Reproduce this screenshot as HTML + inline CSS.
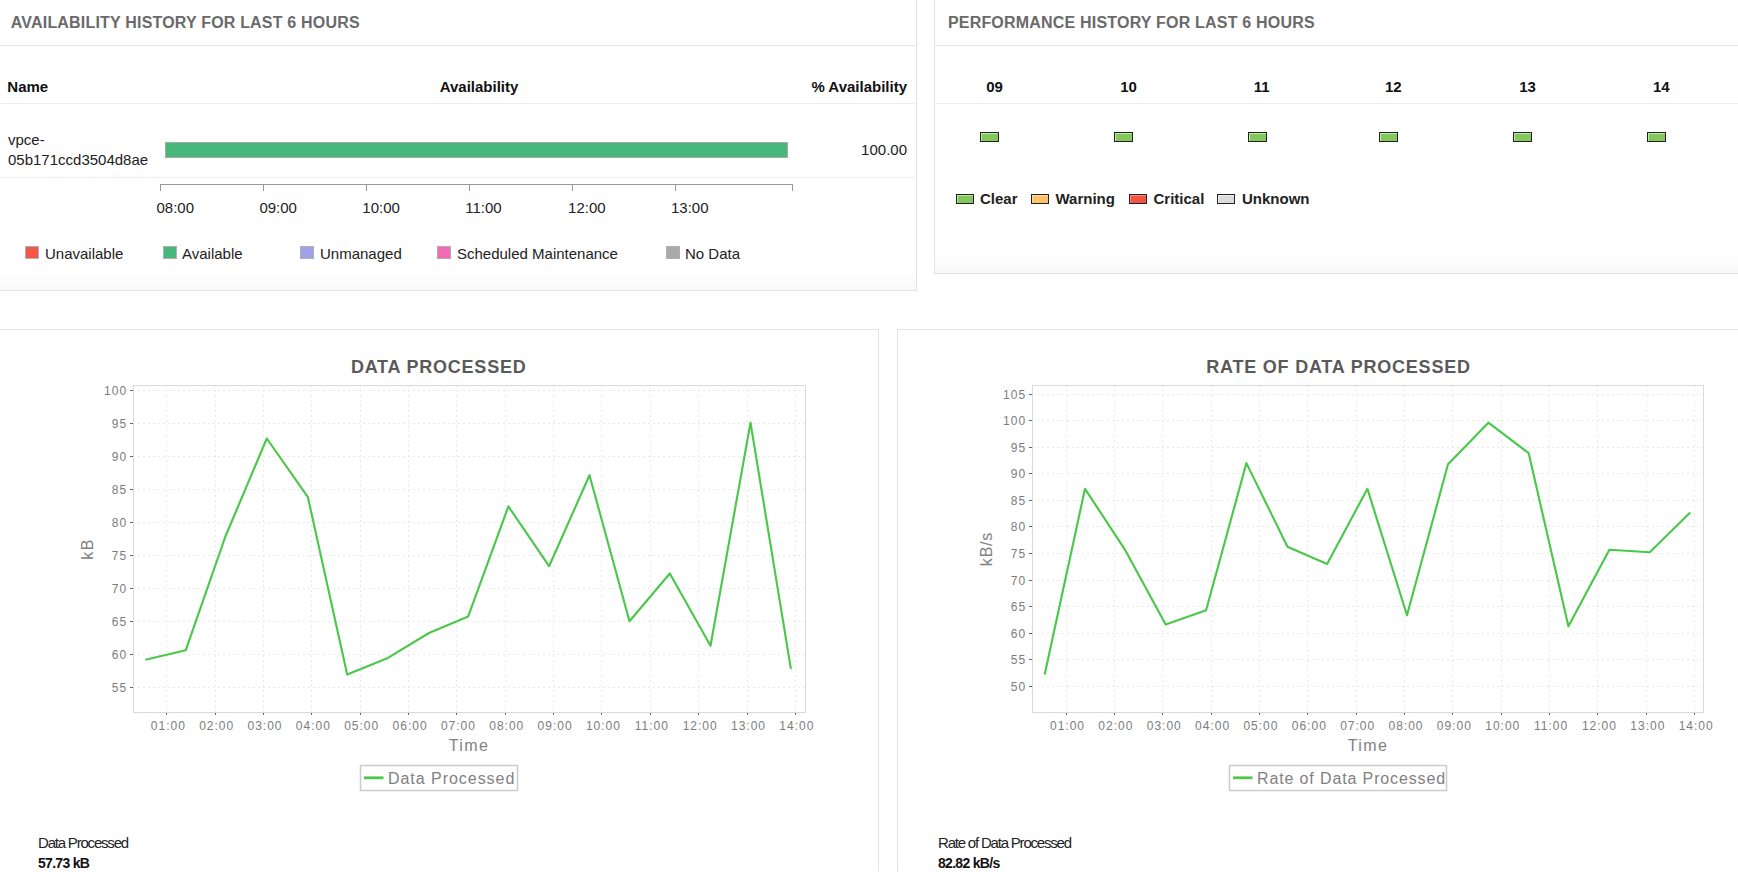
<!DOCTYPE html>
<html><head><meta charset="utf-8"><title>Dashboard</title>
<style>
html,body{margin:0;padding:0;background:#fff;overflow:hidden;}
svg{display:block;font-family:"Liberation Sans", sans-serif;}
</style></head><body>
<svg width="1738" height="872" viewBox="0 0 1738 872">
<rect x="0" y="0" width="1738" height="872" fill="#fff"/>
<defs><linearGradient id="band" x1="0" y1="0" x2="0" y2="1"><stop offset="0" stop-color="#ffffff"/><stop offset="1" stop-color="#f9f9f9"/></linearGradient></defs>
<rect x="0" y="272" width="916" height="18" fill="url(#band)" stroke="none" stroke-width="1" />
<line x1="-1" y1="290.5" x2="916.5" y2="290.5" stroke="#e3e3e3" stroke-width="1" />
<line x1="916.5" y1="-1" x2="916.5" y2="291" stroke="#e3e3e3" stroke-width="1" />
<text x="10.8" y="28" text-anchor="start" style="font-size:16px;font-weight:bold;fill:#6a6a6a;letter-spacing:0.19px" >AVAILABILITY HISTORY FOR LAST 6 HOURS</text>
<line x1="0" y1="45.5" x2="916" y2="45.5" stroke="#e3e3e3" stroke-width="1" />
<text x="7.3" y="92" text-anchor="start" style="font-size:15px;font-weight:bold;fill:#111" >Name</text>
<text x="479" y="92" text-anchor="middle" style="font-size:15px;font-weight:bold;fill:#111" >Availability</text>
<text x="907" y="92" text-anchor="end" style="font-size:15px;font-weight:bold;fill:#111" >% Availability</text>
<line x1="0" y1="103.5" x2="916" y2="103.5" stroke="#efefef" stroke-width="1" />
<text x="8" y="144.5" text-anchor="start" style="font-size:15px;font-weight:normal;fill:#222" >vpce-</text>
<text x="8" y="165" text-anchor="start" style="font-size:15px;font-weight:normal;fill:#222" >05b171ccd3504d8ae</text>
<rect x="165.5" y="142.5" width="622" height="15" fill="#47b87a" stroke="#a9a9a9" stroke-width="1" />
<text x="907" y="154.5" text-anchor="end" style="font-size:15px;font-weight:normal;fill:#222" >100.00</text>
<line x1="0" y1="177.5" x2="916" y2="177.5" stroke="#efefef" stroke-width="1" />
<line x1="160" y1="184.5" x2="793" y2="184.5" stroke="#999" stroke-width="1" />
<line x1="160.5" y1="184" x2="160.5" y2="191" stroke="#999" stroke-width="1" />
<line x1="263.5" y1="184" x2="263.5" y2="191" stroke="#999" stroke-width="1" />
<line x1="366.5" y1="184" x2="366.5" y2="191" stroke="#999" stroke-width="1" />
<line x1="469.5" y1="184" x2="469.5" y2="191" stroke="#999" stroke-width="1" />
<line x1="572.5" y1="184" x2="572.5" y2="191" stroke="#999" stroke-width="1" />
<line x1="675.5" y1="184" x2="675.5" y2="191" stroke="#999" stroke-width="1" />
<line x1="792.5" y1="184" x2="792.5" y2="191" stroke="#999" stroke-width="1" />
<text x="156.5" y="212.5" text-anchor="start" style="font-size:15px;font-weight:normal;fill:#222" >08:00</text>
<text x="259.4" y="212.5" text-anchor="start" style="font-size:15px;font-weight:normal;fill:#222" >09:00</text>
<text x="362.3" y="212.5" text-anchor="start" style="font-size:15px;font-weight:normal;fill:#222" >10:00</text>
<text x="465.20000000000005" y="212.5" text-anchor="start" style="font-size:15px;font-weight:normal;fill:#222" >11:00</text>
<text x="568.1" y="212.5" text-anchor="start" style="font-size:15px;font-weight:normal;fill:#222" >12:00</text>
<text x="671.0" y="212.5" text-anchor="start" style="font-size:15px;font-weight:normal;fill:#222" >13:00</text>
<rect x="25.5" y="246.5" width="13" height="12" fill="#f4574a" stroke="#b0b0b0" stroke-width="1" />
<text x="45" y="259" text-anchor="start" style="font-size:15px;font-weight:normal;fill:#222" >Unavailable</text>
<rect x="163.5" y="246.5" width="13" height="12" fill="#47b87a" stroke="#b0b0b0" stroke-width="1" />
<text x="182" y="259" text-anchor="start" style="font-size:15px;font-weight:normal;fill:#222" >Available</text>
<rect x="300.5" y="246.5" width="13" height="12" fill="#a0a0e8" stroke="#b0b0b0" stroke-width="1" />
<text x="320" y="259" text-anchor="start" style="font-size:15px;font-weight:normal;fill:#222" >Unmanaged</text>
<rect x="437.5" y="246.5" width="13" height="12" fill="#f06ab4" stroke="#b0b0b0" stroke-width="1" />
<text x="457" y="259" text-anchor="start" style="font-size:15px;font-weight:normal;fill:#222" >Scheduled Maintenance</text>
<rect x="666.5" y="246.5" width="13" height="12" fill="#aaaaaa" stroke="#b0b0b0" stroke-width="1" />
<text x="685" y="259" text-anchor="start" style="font-size:15px;font-weight:normal;fill:#222" >No Data</text>
<rect x="934" y="255" width="804" height="18" fill="url(#band)" stroke="none" stroke-width="1" />
<line x1="934.5" y1="-1" x2="934.5" y2="273.5" stroke="#e3e3e3" stroke-width="1" />
<line x1="934" y1="273.5" x2="1739" y2="273.5" stroke="#e3e3e3" stroke-width="1" />
<text x="947.9" y="28" text-anchor="start" style="font-size:16px;font-weight:bold;fill:#6a6a6a;letter-spacing:0.2px" >PERFORMANCE HISTORY FOR LAST 6 HOURS</text>
<line x1="934" y1="45.5" x2="1738" y2="45.5" stroke="#e3e3e3" stroke-width="1" />
<text x="994.5" y="92" text-anchor="middle" style="font-size:15px;font-weight:bold;fill:#111" >09</text>
<rect x="980.5" y="132.5" width="18" height="9" fill="#86c65e" stroke="#222" stroke-width="1" />
<line x1="981" y1="133.5" x2="998" y2="133.5" stroke="#b9eea6" stroke-width="1" />
<line x1="981.5" y1="133" x2="981.5" y2="141" stroke="#b9eea6" stroke-width="1" />
<text x="1128.6" y="92" text-anchor="middle" style="font-size:15px;font-weight:bold;fill:#111" >10</text>
<rect x="1114.5" y="132.5" width="18" height="9" fill="#86c65e" stroke="#222" stroke-width="1" />
<line x1="1115" y1="133.5" x2="1132" y2="133.5" stroke="#b9eea6" stroke-width="1" />
<line x1="1115.5" y1="133" x2="1115.5" y2="141" stroke="#b9eea6" stroke-width="1" />
<text x="1261.6" y="92" text-anchor="middle" style="font-size:15px;font-weight:bold;fill:#111" >11</text>
<rect x="1248.5" y="132.5" width="18" height="9" fill="#86c65e" stroke="#222" stroke-width="1" />
<line x1="1249" y1="133.5" x2="1266" y2="133.5" stroke="#b9eea6" stroke-width="1" />
<line x1="1249.5" y1="133" x2="1249.5" y2="141" stroke="#b9eea6" stroke-width="1" />
<text x="1393.3" y="92" text-anchor="middle" style="font-size:15px;font-weight:bold;fill:#111" >12</text>
<rect x="1379.5" y="132.5" width="18" height="9" fill="#86c65e" stroke="#222" stroke-width="1" />
<line x1="1380" y1="133.5" x2="1397" y2="133.5" stroke="#b9eea6" stroke-width="1" />
<line x1="1380.5" y1="133" x2="1380.5" y2="141" stroke="#b9eea6" stroke-width="1" />
<text x="1527.6" y="92" text-anchor="middle" style="font-size:15px;font-weight:bold;fill:#111" >13</text>
<rect x="1513.5" y="132.5" width="18" height="9" fill="#86c65e" stroke="#222" stroke-width="1" />
<line x1="1514" y1="133.5" x2="1531" y2="133.5" stroke="#b9eea6" stroke-width="1" />
<line x1="1514.5" y1="133" x2="1514.5" y2="141" stroke="#b9eea6" stroke-width="1" />
<text x="1661.3" y="92" text-anchor="middle" style="font-size:15px;font-weight:bold;fill:#111" >14</text>
<rect x="1647.5" y="132.5" width="18" height="9" fill="#86c65e" stroke="#222" stroke-width="1" />
<line x1="1648" y1="133.5" x2="1665" y2="133.5" stroke="#b9eea6" stroke-width="1" />
<line x1="1648.5" y1="133" x2="1648.5" y2="141" stroke="#b9eea6" stroke-width="1" />
<line x1="934" y1="103.5" x2="1738" y2="103.5" stroke="#efefef" stroke-width="1" />
<rect x="956.5" y="194.5" width="17" height="9" fill="#86c65e" stroke="#222" stroke-width="1" />
<line x1="957" y1="195.5" x2="973" y2="195.5" stroke="#b9eea6" stroke-width="1" stroke-opacity="0.9"/>
<line x1="957.5" y1="195" x2="957.5" y2="203" stroke="#b9eea6" stroke-width="1" stroke-opacity="0.9"/>
<text x="980" y="203.5" text-anchor="start" style="font-size:15px;font-weight:bold;fill:#222" >Clear</text>
<rect x="1031.5" y="194.5" width="17" height="9" fill="#ffc266" stroke="#222" stroke-width="1" />
<line x1="1032" y1="195.5" x2="1048" y2="195.5" stroke="#ffe0a8" stroke-width="1" stroke-opacity="0.9"/>
<line x1="1032.5" y1="195" x2="1032.5" y2="203" stroke="#ffe0a8" stroke-width="1" stroke-opacity="0.9"/>
<text x="1055.5" y="203.5" text-anchor="start" style="font-size:15px;font-weight:bold;fill:#222" >Warning</text>
<rect x="1129.5" y="194.5" width="17" height="9" fill="#f45244" stroke="#222" stroke-width="1" />
<line x1="1130" y1="195.5" x2="1146" y2="195.5" stroke="#ff9080" stroke-width="1" stroke-opacity="0.9"/>
<line x1="1130.5" y1="195" x2="1130.5" y2="203" stroke="#ff9080" stroke-width="1" stroke-opacity="0.9"/>
<text x="1153.5" y="203.5" text-anchor="start" style="font-size:15px;font-weight:bold;fill:#222" >Critical</text>
<rect x="1217.5" y="194.5" width="17" height="9" fill="#dcdcdc" stroke="#222" stroke-width="1" />
<line x1="1218" y1="195.5" x2="1234" y2="195.5" stroke="#f0f0f0" stroke-width="1" stroke-opacity="0.9"/>
<line x1="1218.5" y1="195" x2="1218.5" y2="203" stroke="#f0f0f0" stroke-width="1" stroke-opacity="0.9"/>
<text x="1242" y="203.5" text-anchor="start" style="font-size:15px;font-weight:bold;fill:#222" >Unknown</text>
<line x1="878.5" y1="329" x2="878.5" y2="873" stroke="#e3e3e3" stroke-width="1" />
<line x1="-1" y1="329.5" x2="879" y2="329.5" stroke="#e3e3e3" stroke-width="1" />
<line x1="897.5" y1="329" x2="897.5" y2="873" stroke="#e3e3e3" stroke-width="1" />
<line x1="897" y1="329.5" x2="1739" y2="329.5" stroke="#e3e3e3" stroke-width="1" />
<line x1="133" y1="687.5" x2="805" y2="687.5" stroke="#e9e9e9" stroke-width="1" stroke-dasharray="2,3"/>
<line x1="130" y1="687.5" x2="133" y2="687.5" stroke="#666" stroke-width="1" />
<text x="127.5" y="692" text-anchor="end" style="font-size:12px;font-weight:normal;fill:#7c7c7c;letter-spacing:1.2px" >55</text>
<line x1="133" y1="654.5" x2="805" y2="654.5" stroke="#e9e9e9" stroke-width="1" stroke-dasharray="2,3"/>
<line x1="130" y1="654.5" x2="133" y2="654.5" stroke="#666" stroke-width="1" />
<text x="127.5" y="659" text-anchor="end" style="font-size:12px;font-weight:normal;fill:#7c7c7c;letter-spacing:1.2px" >60</text>
<line x1="133" y1="621.5" x2="805" y2="621.5" stroke="#e9e9e9" stroke-width="1" stroke-dasharray="2,3"/>
<line x1="130" y1="621.5" x2="133" y2="621.5" stroke="#666" stroke-width="1" />
<text x="127.5" y="626" text-anchor="end" style="font-size:12px;font-weight:normal;fill:#7c7c7c;letter-spacing:1.2px" >65</text>
<line x1="133" y1="588.5" x2="805" y2="588.5" stroke="#e9e9e9" stroke-width="1" stroke-dasharray="2,3"/>
<line x1="130" y1="588.5" x2="133" y2="588.5" stroke="#666" stroke-width="1" />
<text x="127.5" y="593" text-anchor="end" style="font-size:12px;font-weight:normal;fill:#7c7c7c;letter-spacing:1.2px" >70</text>
<line x1="133" y1="555.5" x2="805" y2="555.5" stroke="#e9e9e9" stroke-width="1" stroke-dasharray="2,3"/>
<line x1="130" y1="555.5" x2="133" y2="555.5" stroke="#666" stroke-width="1" />
<text x="127.5" y="560" text-anchor="end" style="font-size:12px;font-weight:normal;fill:#7c7c7c;letter-spacing:1.2px" >75</text>
<line x1="133" y1="522.5" x2="805" y2="522.5" stroke="#e9e9e9" stroke-width="1" stroke-dasharray="2,3"/>
<line x1="130" y1="522.5" x2="133" y2="522.5" stroke="#666" stroke-width="1" />
<text x="127.5" y="527" text-anchor="end" style="font-size:12px;font-weight:normal;fill:#7c7c7c;letter-spacing:1.2px" >80</text>
<line x1="133" y1="489.5" x2="805" y2="489.5" stroke="#e9e9e9" stroke-width="1" stroke-dasharray="2,3"/>
<line x1="130" y1="489.5" x2="133" y2="489.5" stroke="#666" stroke-width="1" />
<text x="127.5" y="494" text-anchor="end" style="font-size:12px;font-weight:normal;fill:#7c7c7c;letter-spacing:1.2px" >85</text>
<line x1="133" y1="456.5" x2="805" y2="456.5" stroke="#e9e9e9" stroke-width="1" stroke-dasharray="2,3"/>
<line x1="130" y1="456.5" x2="133" y2="456.5" stroke="#666" stroke-width="1" />
<text x="127.5" y="461" text-anchor="end" style="font-size:12px;font-weight:normal;fill:#7c7c7c;letter-spacing:1.2px" >90</text>
<line x1="133" y1="423.5" x2="805" y2="423.5" stroke="#e9e9e9" stroke-width="1" stroke-dasharray="2,3"/>
<line x1="130" y1="423.5" x2="133" y2="423.5" stroke="#666" stroke-width="1" />
<text x="127.5" y="428" text-anchor="end" style="font-size:12px;font-weight:normal;fill:#7c7c7c;letter-spacing:1.2px" >95</text>
<line x1="133" y1="390.5" x2="805" y2="390.5" stroke="#e9e9e9" stroke-width="1" stroke-dasharray="2,3"/>
<line x1="130" y1="390.5" x2="133" y2="390.5" stroke="#666" stroke-width="1" />
<text x="127.5" y="395" text-anchor="end" style="font-size:12px;font-weight:normal;fill:#7c7c7c;letter-spacing:1.2px" >100</text>
<line x1="166.5" y1="385" x2="166.5" y2="712" stroke="#e9e9e9" stroke-width="1" stroke-dasharray="2,3"/>
<line x1="166.5" y1="712" x2="166.5" y2="715" stroke="#666" stroke-width="1" />
<text x="168.3" y="729.5" text-anchor="middle" style="font-size:12px;font-weight:normal;fill:#7c7c7c;letter-spacing:1.0px" >01:00</text>
<line x1="215.5" y1="385" x2="215.5" y2="712" stroke="#e9e9e9" stroke-width="1" stroke-dasharray="2,3"/>
<line x1="215.5" y1="712" x2="215.5" y2="715" stroke="#666" stroke-width="1" />
<text x="216.65" y="729.5" text-anchor="middle" style="font-size:12px;font-weight:normal;fill:#7c7c7c;letter-spacing:1.0px" >02:00</text>
<line x1="263.5" y1="385" x2="263.5" y2="712" stroke="#e9e9e9" stroke-width="1" stroke-dasharray="2,3"/>
<line x1="263.5" y1="712" x2="263.5" y2="715" stroke="#666" stroke-width="1" />
<text x="265.0" y="729.5" text-anchor="middle" style="font-size:12px;font-weight:normal;fill:#7c7c7c;letter-spacing:1.0px" >03:00</text>
<line x1="311.5" y1="385" x2="311.5" y2="712" stroke="#e9e9e9" stroke-width="1" stroke-dasharray="2,3"/>
<line x1="311.5" y1="712" x2="311.5" y2="715" stroke="#666" stroke-width="1" />
<text x="313.35" y="729.5" text-anchor="middle" style="font-size:12px;font-weight:normal;fill:#7c7c7c;letter-spacing:1.0px" >04:00</text>
<line x1="360.5" y1="385" x2="360.5" y2="712" stroke="#e9e9e9" stroke-width="1" stroke-dasharray="2,3"/>
<line x1="360.5" y1="712" x2="360.5" y2="715" stroke="#666" stroke-width="1" />
<text x="361.70000000000005" y="729.5" text-anchor="middle" style="font-size:12px;font-weight:normal;fill:#7c7c7c;letter-spacing:1.0px" >05:00</text>
<line x1="408.5" y1="385" x2="408.5" y2="712" stroke="#e9e9e9" stroke-width="1" stroke-dasharray="2,3"/>
<line x1="408.5" y1="712" x2="408.5" y2="715" stroke="#666" stroke-width="1" />
<text x="410.05" y="729.5" text-anchor="middle" style="font-size:12px;font-weight:normal;fill:#7c7c7c;letter-spacing:1.0px" >06:00</text>
<line x1="456.5" y1="385" x2="456.5" y2="712" stroke="#e9e9e9" stroke-width="1" stroke-dasharray="2,3"/>
<line x1="456.5" y1="712" x2="456.5" y2="715" stroke="#666" stroke-width="1" />
<text x="458.40000000000003" y="729.5" text-anchor="middle" style="font-size:12px;font-weight:normal;fill:#7c7c7c;letter-spacing:1.0px" >07:00</text>
<line x1="505.5" y1="385" x2="505.5" y2="712" stroke="#e9e9e9" stroke-width="1" stroke-dasharray="2,3"/>
<line x1="505.5" y1="712" x2="505.5" y2="715" stroke="#666" stroke-width="1" />
<text x="506.75" y="729.5" text-anchor="middle" style="font-size:12px;font-weight:normal;fill:#7c7c7c;letter-spacing:1.0px" >08:00</text>
<line x1="553.5" y1="385" x2="553.5" y2="712" stroke="#e9e9e9" stroke-width="1" stroke-dasharray="2,3"/>
<line x1="553.5" y1="712" x2="553.5" y2="715" stroke="#666" stroke-width="1" />
<text x="555.1" y="729.5" text-anchor="middle" style="font-size:12px;font-weight:normal;fill:#7c7c7c;letter-spacing:1.0px" >09:00</text>
<line x1="601.5" y1="385" x2="601.5" y2="712" stroke="#e9e9e9" stroke-width="1" stroke-dasharray="2,3"/>
<line x1="601.5" y1="712" x2="601.5" y2="715" stroke="#666" stroke-width="1" />
<text x="603.45" y="729.5" text-anchor="middle" style="font-size:12px;font-weight:normal;fill:#7c7c7c;letter-spacing:1.0px" >10:00</text>
<line x1="650.5" y1="385" x2="650.5" y2="712" stroke="#e9e9e9" stroke-width="1" stroke-dasharray="2,3"/>
<line x1="650.5" y1="712" x2="650.5" y2="715" stroke="#666" stroke-width="1" />
<text x="651.8" y="729.5" text-anchor="middle" style="font-size:12px;font-weight:normal;fill:#7c7c7c;letter-spacing:1.0px" >11:00</text>
<line x1="698.5" y1="385" x2="698.5" y2="712" stroke="#e9e9e9" stroke-width="1" stroke-dasharray="2,3"/>
<line x1="698.5" y1="712" x2="698.5" y2="715" stroke="#666" stroke-width="1" />
<text x="700.1500000000001" y="729.5" text-anchor="middle" style="font-size:12px;font-weight:normal;fill:#7c7c7c;letter-spacing:1.0px" >12:00</text>
<line x1="747.5" y1="385" x2="747.5" y2="712" stroke="#e9e9e9" stroke-width="1" stroke-dasharray="2,3"/>
<line x1="747.5" y1="712" x2="747.5" y2="715" stroke="#666" stroke-width="1" />
<text x="748.5" y="729.5" text-anchor="middle" style="font-size:12px;font-weight:normal;fill:#7c7c7c;letter-spacing:1.0px" >13:00</text>
<line x1="795.5" y1="385" x2="795.5" y2="712" stroke="#e9e9e9" stroke-width="1" stroke-dasharray="2,3"/>
<line x1="795.5" y1="712" x2="795.5" y2="715" stroke="#666" stroke-width="1" />
<text x="796.8500000000001" y="729.5" text-anchor="middle" style="font-size:12px;font-weight:normal;fill:#7c7c7c;letter-spacing:1.0px" >14:00</text>
<rect x="133.5" y="385.5" width="672" height="327" fill="none" stroke="#dadada" stroke-width="1" />
<polyline points="145.4,659.7 185.8,650.2 225.4,536.5 266.8,438.5 307.9,497.2 347.2,674.4 387.9,657.9 429,633 468.2,616.4 508.4,506.4 549.1,566.2 589.5,475.2 629.5,621.2 669.8,573.5 710.5,645.8 750.5,422.7 790.9,668.9" fill="none" stroke="#4bc84b" stroke-width="2.15" stroke-linejoin="round" stroke-linecap="butt"/>
<text x="438.7" y="372.5" text-anchor="middle" style="font-size:18px;font-weight:bold;fill:#5a5a5a;letter-spacing:0.78px" >DATA PROCESSED</text>
<text transform="translate(93,549) rotate(-90)" text-anchor="middle" style="font-size:16px;fill:#818181;letter-spacing:1.5px">kB</text>
<text x="469" y="750.5" text-anchor="middle" style="font-size:16px;font-weight:normal;fill:#818181;letter-spacing:1.4px" >Time</text>
<rect x="360.5" y="765.5" width="157" height="25" fill="#fff" stroke="#cccccc" stroke-width="1.5" />
<line x1="364" y1="777.8" x2="383.5" y2="777.8" stroke="#4bc84b" stroke-width="2.8" />
<text x="388" y="783.5" text-anchor="start" style="font-size:16px;font-weight:normal;fill:#818181;letter-spacing:0.96px" >Data Processed</text>
<text x="38" y="848" text-anchor="start" style="font-size:15px;font-weight:normal;fill:#222;letter-spacing:-1.2px" >Data Processed</text>
<text x="38" y="867.5" text-anchor="start" style="font-size:14px;font-weight:bold;fill:#111;letter-spacing:-0.7px" >57.73 kB</text>
<line x1="0" y1="870.5" x2="878" y2="870.5" stroke="#f2f2f2" stroke-width="1" stroke-dasharray="1,2"/>
<line x1="1032" y1="686.5" x2="1703" y2="686.5" stroke="#e9e9e9" stroke-width="1" stroke-dasharray="2,3"/>
<line x1="1029" y1="686.5" x2="1032" y2="686.5" stroke="#666" stroke-width="1" />
<text x="1026.5" y="691" text-anchor="end" style="font-size:12px;font-weight:normal;fill:#7c7c7c;letter-spacing:1.2px" >50</text>
<line x1="1032" y1="659.5" x2="1703" y2="659.5" stroke="#e9e9e9" stroke-width="1" stroke-dasharray="2,3"/>
<line x1="1029" y1="659.5" x2="1032" y2="659.5" stroke="#666" stroke-width="1" />
<text x="1026.5" y="664" text-anchor="end" style="font-size:12px;font-weight:normal;fill:#7c7c7c;letter-spacing:1.2px" >55</text>
<line x1="1032" y1="633.5" x2="1703" y2="633.5" stroke="#e9e9e9" stroke-width="1" stroke-dasharray="2,3"/>
<line x1="1029" y1="633.5" x2="1032" y2="633.5" stroke="#666" stroke-width="1" />
<text x="1026.5" y="638" text-anchor="end" style="font-size:12px;font-weight:normal;fill:#7c7c7c;letter-spacing:1.2px" >60</text>
<line x1="1032" y1="606.5" x2="1703" y2="606.5" stroke="#e9e9e9" stroke-width="1" stroke-dasharray="2,3"/>
<line x1="1029" y1="606.5" x2="1032" y2="606.5" stroke="#666" stroke-width="1" />
<text x="1026.5" y="611" text-anchor="end" style="font-size:12px;font-weight:normal;fill:#7c7c7c;letter-spacing:1.2px" >65</text>
<line x1="1032" y1="580.5" x2="1703" y2="580.5" stroke="#e9e9e9" stroke-width="1" stroke-dasharray="2,3"/>
<line x1="1029" y1="580.5" x2="1032" y2="580.5" stroke="#666" stroke-width="1" />
<text x="1026.5" y="585" text-anchor="end" style="font-size:12px;font-weight:normal;fill:#7c7c7c;letter-spacing:1.2px" >70</text>
<line x1="1032" y1="553.5" x2="1703" y2="553.5" stroke="#e9e9e9" stroke-width="1" stroke-dasharray="2,3"/>
<line x1="1029" y1="553.5" x2="1032" y2="553.5" stroke="#666" stroke-width="1" />
<text x="1026.5" y="558" text-anchor="end" style="font-size:12px;font-weight:normal;fill:#7c7c7c;letter-spacing:1.2px" >75</text>
<line x1="1032" y1="526.5" x2="1703" y2="526.5" stroke="#e9e9e9" stroke-width="1" stroke-dasharray="2,3"/>
<line x1="1029" y1="526.5" x2="1032" y2="526.5" stroke="#666" stroke-width="1" />
<text x="1026.5" y="531" text-anchor="end" style="font-size:12px;font-weight:normal;fill:#7c7c7c;letter-spacing:1.2px" >80</text>
<line x1="1032" y1="500.5" x2="1703" y2="500.5" stroke="#e9e9e9" stroke-width="1" stroke-dasharray="2,3"/>
<line x1="1029" y1="500.5" x2="1032" y2="500.5" stroke="#666" stroke-width="1" />
<text x="1026.5" y="505" text-anchor="end" style="font-size:12px;font-weight:normal;fill:#7c7c7c;letter-spacing:1.2px" >85</text>
<line x1="1032" y1="473.5" x2="1703" y2="473.5" stroke="#e9e9e9" stroke-width="1" stroke-dasharray="2,3"/>
<line x1="1029" y1="473.5" x2="1032" y2="473.5" stroke="#666" stroke-width="1" />
<text x="1026.5" y="478" text-anchor="end" style="font-size:12px;font-weight:normal;fill:#7c7c7c;letter-spacing:1.2px" >90</text>
<line x1="1032" y1="447.5" x2="1703" y2="447.5" stroke="#e9e9e9" stroke-width="1" stroke-dasharray="2,3"/>
<line x1="1029" y1="447.5" x2="1032" y2="447.5" stroke="#666" stroke-width="1" />
<text x="1026.5" y="452" text-anchor="end" style="font-size:12px;font-weight:normal;fill:#7c7c7c;letter-spacing:1.2px" >95</text>
<line x1="1032" y1="420.5" x2="1703" y2="420.5" stroke="#e9e9e9" stroke-width="1" stroke-dasharray="2,3"/>
<line x1="1029" y1="420.5" x2="1032" y2="420.5" stroke="#666" stroke-width="1" />
<text x="1026.5" y="425" text-anchor="end" style="font-size:12px;font-weight:normal;fill:#7c7c7c;letter-spacing:1.2px" >100</text>
<line x1="1032" y1="394.5" x2="1703" y2="394.5" stroke="#e9e9e9" stroke-width="1" stroke-dasharray="2,3"/>
<line x1="1029" y1="394.5" x2="1032" y2="394.5" stroke="#666" stroke-width="1" />
<text x="1026.5" y="399" text-anchor="end" style="font-size:12px;font-weight:normal;fill:#7c7c7c;letter-spacing:1.2px" >105</text>
<line x1="1066.5" y1="385" x2="1066.5" y2="712" stroke="#e9e9e9" stroke-width="1" stroke-dasharray="2,3"/>
<line x1="1066.5" y1="712" x2="1066.5" y2="715" stroke="#666" stroke-width="1" />
<text x="1067.5" y="729.5" text-anchor="middle" style="font-size:12px;font-weight:normal;fill:#7c7c7c;letter-spacing:1.0px" >01:00</text>
<line x1="1114.5" y1="385" x2="1114.5" y2="712" stroke="#e9e9e9" stroke-width="1" stroke-dasharray="2,3"/>
<line x1="1114.5" y1="712" x2="1114.5" y2="715" stroke="#666" stroke-width="1" />
<text x="1115.86" y="729.5" text-anchor="middle" style="font-size:12px;font-weight:normal;fill:#7c7c7c;letter-spacing:1.0px" >02:00</text>
<line x1="1162.5" y1="385" x2="1162.5" y2="712" stroke="#e9e9e9" stroke-width="1" stroke-dasharray="2,3"/>
<line x1="1162.5" y1="712" x2="1162.5" y2="715" stroke="#666" stroke-width="1" />
<text x="1164.22" y="729.5" text-anchor="middle" style="font-size:12px;font-weight:normal;fill:#7c7c7c;letter-spacing:1.0px" >03:00</text>
<line x1="1211.5" y1="385" x2="1211.5" y2="712" stroke="#e9e9e9" stroke-width="1" stroke-dasharray="2,3"/>
<line x1="1211.5" y1="712" x2="1211.5" y2="715" stroke="#666" stroke-width="1" />
<text x="1212.58" y="729.5" text-anchor="middle" style="font-size:12px;font-weight:normal;fill:#7c7c7c;letter-spacing:1.0px" >04:00</text>
<line x1="1259.5" y1="385" x2="1259.5" y2="712" stroke="#e9e9e9" stroke-width="1" stroke-dasharray="2,3"/>
<line x1="1259.5" y1="712" x2="1259.5" y2="715" stroke="#666" stroke-width="1" />
<text x="1260.94" y="729.5" text-anchor="middle" style="font-size:12px;font-weight:normal;fill:#7c7c7c;letter-spacing:1.0px" >05:00</text>
<line x1="1307.5" y1="385" x2="1307.5" y2="712" stroke="#e9e9e9" stroke-width="1" stroke-dasharray="2,3"/>
<line x1="1307.5" y1="712" x2="1307.5" y2="715" stroke="#666" stroke-width="1" />
<text x="1309.3" y="729.5" text-anchor="middle" style="font-size:12px;font-weight:normal;fill:#7c7c7c;letter-spacing:1.0px" >06:00</text>
<line x1="1356.5" y1="385" x2="1356.5" y2="712" stroke="#e9e9e9" stroke-width="1" stroke-dasharray="2,3"/>
<line x1="1356.5" y1="712" x2="1356.5" y2="715" stroke="#666" stroke-width="1" />
<text x="1357.6599999999999" y="729.5" text-anchor="middle" style="font-size:12px;font-weight:normal;fill:#7c7c7c;letter-spacing:1.0px" >07:00</text>
<line x1="1404.5" y1="385" x2="1404.5" y2="712" stroke="#e9e9e9" stroke-width="1" stroke-dasharray="2,3"/>
<line x1="1404.5" y1="712" x2="1404.5" y2="715" stroke="#666" stroke-width="1" />
<text x="1406.02" y="729.5" text-anchor="middle" style="font-size:12px;font-weight:normal;fill:#7c7c7c;letter-spacing:1.0px" >08:00</text>
<line x1="1452.5" y1="385" x2="1452.5" y2="712" stroke="#e9e9e9" stroke-width="1" stroke-dasharray="2,3"/>
<line x1="1452.5" y1="712" x2="1452.5" y2="715" stroke="#666" stroke-width="1" />
<text x="1454.38" y="729.5" text-anchor="middle" style="font-size:12px;font-weight:normal;fill:#7c7c7c;letter-spacing:1.0px" >09:00</text>
<line x1="1501.5" y1="385" x2="1501.5" y2="712" stroke="#e9e9e9" stroke-width="1" stroke-dasharray="2,3"/>
<line x1="1501.5" y1="712" x2="1501.5" y2="715" stroke="#666" stroke-width="1" />
<text x="1502.74" y="729.5" text-anchor="middle" style="font-size:12px;font-weight:normal;fill:#7c7c7c;letter-spacing:1.0px" >10:00</text>
<line x1="1549.5" y1="385" x2="1549.5" y2="712" stroke="#e9e9e9" stroke-width="1" stroke-dasharray="2,3"/>
<line x1="1549.5" y1="712" x2="1549.5" y2="715" stroke="#666" stroke-width="1" />
<text x="1551.1" y="729.5" text-anchor="middle" style="font-size:12px;font-weight:normal;fill:#7c7c7c;letter-spacing:1.0px" >11:00</text>
<line x1="1597.5" y1="385" x2="1597.5" y2="712" stroke="#e9e9e9" stroke-width="1" stroke-dasharray="2,3"/>
<line x1="1597.5" y1="712" x2="1597.5" y2="715" stroke="#666" stroke-width="1" />
<text x="1599.46" y="729.5" text-anchor="middle" style="font-size:12px;font-weight:normal;fill:#7c7c7c;letter-spacing:1.0px" >12:00</text>
<line x1="1646.5" y1="385" x2="1646.5" y2="712" stroke="#e9e9e9" stroke-width="1" stroke-dasharray="2,3"/>
<line x1="1646.5" y1="712" x2="1646.5" y2="715" stroke="#666" stroke-width="1" />
<text x="1647.82" y="729.5" text-anchor="middle" style="font-size:12px;font-weight:normal;fill:#7c7c7c;letter-spacing:1.0px" >13:00</text>
<line x1="1694.5" y1="385" x2="1694.5" y2="712" stroke="#e9e9e9" stroke-width="1" stroke-dasharray="2,3"/>
<line x1="1694.5" y1="712" x2="1694.5" y2="715" stroke="#666" stroke-width="1" />
<text x="1696.1799999999998" y="729.5" text-anchor="middle" style="font-size:12px;font-weight:normal;fill:#7c7c7c;letter-spacing:1.0px" >14:00</text>
<rect x="1032.5" y="385.5" width="671" height="327" fill="none" stroke="#dadada" stroke-width="1" />
<polyline points="1044.7,674.4 1085,488.8 1125.4,550.4 1165.7,624.5 1206.1,610.2 1246.4,463.1 1287.5,546.7 1327.1,564 1367.4,488.8 1407,615.3 1448,464.2 1488.4,422.7 1528.7,453.2 1568.4,626.3 1609.4,549.7 1649.8,552.2 1690.2,512.6" fill="none" stroke="#4bc84b" stroke-width="2.15" stroke-linejoin="round" stroke-linecap="butt"/>
<text x="1338.5" y="372.5" text-anchor="middle" style="font-size:18px;font-weight:bold;fill:#5a5a5a;letter-spacing:0.78px" >RATE OF DATA PROCESSED</text>
<text transform="translate(992,549) rotate(-90)" text-anchor="middle" style="font-size:16px;fill:#818181;letter-spacing:0.8px">kB/s</text>
<text x="1368" y="750.5" text-anchor="middle" style="font-size:16px;font-weight:normal;fill:#818181;letter-spacing:1.4px" >Time</text>
<rect x="1229.5" y="765.5" width="217" height="25" fill="#fff" stroke="#cccccc" stroke-width="1.5" />
<line x1="1233" y1="777.8" x2="1252.5" y2="777.8" stroke="#4bc84b" stroke-width="2.8" />
<text x="1257" y="783.5" text-anchor="start" style="font-size:16px;font-weight:normal;fill:#818181;letter-spacing:0.87px" >Rate of Data Processed</text>
<text x="938" y="848" text-anchor="start" style="font-size:15px;font-weight:normal;fill:#222;letter-spacing:-1.2px" >Rate of Data Processed</text>
<text x="938" y="867.5" text-anchor="start" style="font-size:14px;font-weight:bold;fill:#111;letter-spacing:-0.7px" >82.82 kB/s</text>
<line x1="898" y1="870.5" x2="1738" y2="870.5" stroke="#f2f2f2" stroke-width="1" stroke-dasharray="1,2"/>
</svg>
</body></html>
